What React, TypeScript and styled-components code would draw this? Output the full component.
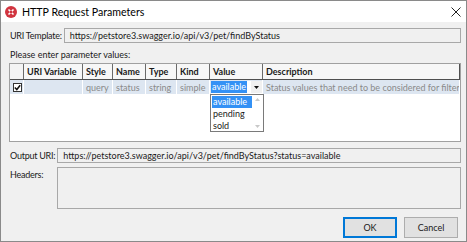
import React from 'react';
import styled, { createGlobalStyle, css } from 'styled-components';

const GlobalStyle = createGlobalStyle`
  html, body {
    margin: 0;
    padding: 0;
    background: #ffffff;
  }
  * {
    box-sizing: border-box;
  }
`;

const FONT = `Lato, "Open Sans", sans-serif`;

const Window = styled.div`
  width: 467px;
  height: 242px;
  border: 1px solid #8a8a8a;
  display: flex;
  flex-direction: column;
  font-family: ${FONT};
  font-size: 9px;
  color: #1a1a1a;
  overflow: hidden;
`;

const TitleBar = styled.div`
  height: 21px;
  background: #ffffff;
  display: flex;
  align-items: center;
  padding: 0 5px 0 4px;
  gap: 5px;
`;

const Title = styled.span`
  flex: 1;
  font-size: 10.6px;
  color: #000;
`;

const Body = styled.div`
  flex: 1;
  background: #f0f0f0;
  display: flex;
  flex-direction: column;
  padding: 6px 5px 0 8px;
`;

const FieldRow = styled.div<{ $tall?: boolean }>`
  display: flex;
  align-items: ${({ $tall }) => ($tall ? 'flex-start' : 'center')};
  gap: 2px;
  margin-bottom: 4px;
`;

const Label = styled.span<{ $width: number }>`
  flex: 0 0 ${({ $width }) => $width}px;
  padding-left: 1px;
  white-space: nowrap;
  letter-spacing: -0.25px;
  line-height: 15px;
`;

const TextBox = styled.div<{ $height?: number }>`
  flex: 1;
  height: ${({ $height }) => $height ?? 15}px;
  border: 1px solid #a8a8a8;
  background: #f0f0f0;
  padding: 0 5px;
  line-height: 13px;
  white-space: nowrap;
  overflow: hidden;
`;

const Prompt = styled.div`
  padding-left: 1px;
  line-height: 14px;
  margin: 1px 0 1px;
`;

const TableBox = styled.div`
  position: relative;
  height: 79px;
  border: 1px solid #a0a0a0;
  background: #ffffff;
  margin-bottom: 6px;
`;

const cols = '14px 59px 30px 33px 31px 33px 53px 1fr';

const HeaderRow = styled.div`
  display: grid;
  grid-template-columns: ${cols};
  height: 16px;
  border-bottom: 1px solid #505050;
`;

const HeaderCell = styled.div<{ $first?: boolean }>`
  font-weight: 700;
  padding-left: 3px;
  line-height: 15px;
  background: ${({ $first }) => ($first ? '#f4f4f4' : '#f7f7f7')};
  border-right: 1px solid #6a6a6a;
  white-space: nowrap;
  overflow: hidden;
  &:last-child {
    border-right: 1px solid #505050;
  }
`;

const DataRow = styled.div`
  display: grid;
  grid-template-columns: ${cols};
  height: 14px;
  background: #dde6f1;
`;

const DataCell = styled.div<{ $muted?: boolean; $tight?: boolean }>`
  padding-left: ${({ $tight }) => ($tight ? 1 : 3)}px;
  line-height: 13px;
  color: ${({ $muted }) => ($muted ? '#8a8a8a' : '#1a1a1a')};
  border-right: 1px solid #ffffff;
  white-space: nowrap;
  overflow: hidden;
  display: flex;
  align-items: center;
`;

const CheckBox = styled.div`
  width: 9px;
  height: 9px;
  border: 1px solid #333;
  background: #fff;
  display: flex;
  align-items: center;
  justify-content: center;
`;

const Combo = styled.div`
  display: flex;
  align-items: center;
  height: 13px;
  background: #ffffff;
  width: 100%;
`;

const Selected = styled.span`
  background: #3391f5;
  color: #ffffff;
  padding: 0 1px;
  line-height: 12px;
`;

const ComboArrow = styled.div`
  margin-left: auto;
  width: 11px;
  height: 12px;
  display: flex;
  align-items: center;
  justify-content: center;
  background: #f0f0f0;
`;

const DropList = styled.div`
  position: absolute;
  left: 200px;
  top: 30px;
  width: 54px;
  height: 38px;
  background: #ffffff;
  border: 1px solid #7a7a7a;
  display: flex;
`;

const Items = styled.div`
  flex: 1;
  display: flex;
  flex-direction: column;
  padding: 1px 0 0 1px;
`;

const Item = styled.div<{ $active?: boolean }>`
  height: 12px;
  line-height: 12px;
  padding-left: 1px;
  background: ${({ $active }) => ($active ? '#3391f5' : 'transparent')};
  color: ${({ $active }) => ($active ? '#ffffff' : '#1a1a1a')};
`;

const ScrollBar = styled.div`
  width: 11px;
  display: flex;
  flex-direction: column;
  justify-content: space-between;
  align-items: center;
  padding: 3px 0;
`;

const ButtonRow = styled.div`
  display: flex;
  justify-content: flex-end;
  gap: 7px;
  margin-top: 4px;
  padding-right: 3px;
`;

const Button = styled.div<{ $default?: boolean }>`
  width: 54px;
  height: 21px;
  display: flex;
  align-items: center;
  justify-content: center;
  background: #e1e1e1;
  border: 1px solid ${({ $default }) => ($default ? '#0078d7' : '#adadad')};
  ${({ $default }) =>
    $default &&
    css`
      box-shadow: inset 0 0 0 1px #0078d7;
    `}
`;

const AppIcon = () => (
  <svg width="12" height="12" viewBox="0 0 12 12">
    <circle cx="6" cy="6" r="6" fill="#d1343f" />
    <path d="M3.5 3.5 L8.5 8.5 M8.5 3.5 L3.5 8.5" stroke="#fff" strokeWidth="1.6" />
    <circle cx="6" cy="6" r="1.3" fill="#d1343f" />
  </svg>
);

const CloseIcon = () => (
  <svg width="10" height="10" viewBox="0 0 10 10">
    <path d="M0.5 0.5 L9.5 9.5 M9.5 0.5 L0.5 9.5" stroke="#222" strokeWidth="1" />
  </svg>
);

const Tri = ({ up, color }: { up?: boolean; color: string }) => (
  <svg width="5" height="3" viewBox="0 0 5 3">
    <path d={up ? 'M0 3 L2.5 0 L5 3 Z' : 'M0 0 L5 0 L2.5 3 Z'} fill={color} />
  </svg>
);

const headers = ['', 'URI Variable', 'Style', 'Name', 'Type', 'Kind', 'Value', 'Description'];

export default function App() {
  return (
    <>
      <GlobalStyle />
      <Window>
        <TitleBar>
          <AppIcon />
          <Title>HTTP Request Parameters</Title>
          <CloseIcon />
        </TitleBar>
        <Body>
          <FieldRow>
            <Label $width={51}>URI Template:</Label>
            <TextBox>https://petstore3.swagger.io/api/v3/pet/findByStatus</TextBox>
          </FieldRow>
          <Prompt>Please enter parameter values:</Prompt>
          <TableBox>
            <HeaderRow>
              {headers.map((h, i) => (
                <HeaderCell key={i} $first={i === 0}>
                  {h}
                </HeaderCell>
              ))}
            </HeaderRow>
            <DataRow>
              <DataCell>
                <CheckBox>
                  <svg width="7" height="7" viewBox="0 0 7 7">
                    <path d="M0.8 3.5 L2.8 5.5 L6.2 1.2" stroke="#111" strokeWidth="1.5" fill="none" />
                  </svg>
                </CheckBox>
              </DataCell>
              <DataCell />
              <DataCell $muted>query</DataCell>
              <DataCell $muted>status</DataCell>
              <DataCell $muted>string</DataCell>
              <DataCell $muted>simple</DataCell>
              <DataCell $tight>
                <Combo>
                  <Selected>available</Selected>
                  <ComboArrow>
                    <Tri color="#111" />
                  </ComboArrow>
                </Combo>
              </DataCell>
              <DataCell $muted>Status values that need to be considered for filter</DataCell>
            </DataRow>
            <DropList>
              <Items>
                <Item $active>available</Item>
                <Item>pending</Item>
                <Item>sold</Item>
              </Items>
              <ScrollBar>
                <Tri up color="#c8c8c8" />
                <Tri color="#c8c8c8" />
              </ScrollBar>
            </DropList>
          </TableBox>
          <FieldRow>
            <Label $width={46}>Output URI:</Label>
            <TextBox>https://petstore3.swagger.io/api/v3/pet/findByStatus?status=available</TextBox>
          </FieldRow>
          <FieldRow $tall>
            <Label $width={46}>Headers:</Label>
            <TextBox $height={42} />
          </FieldRow>
          <ButtonRow>
            <Button $default>OK</Button>
            <Button>Cancel</Button>
          </ButtonRow>
        </Body>
      </Window>
    </>
  );
}
